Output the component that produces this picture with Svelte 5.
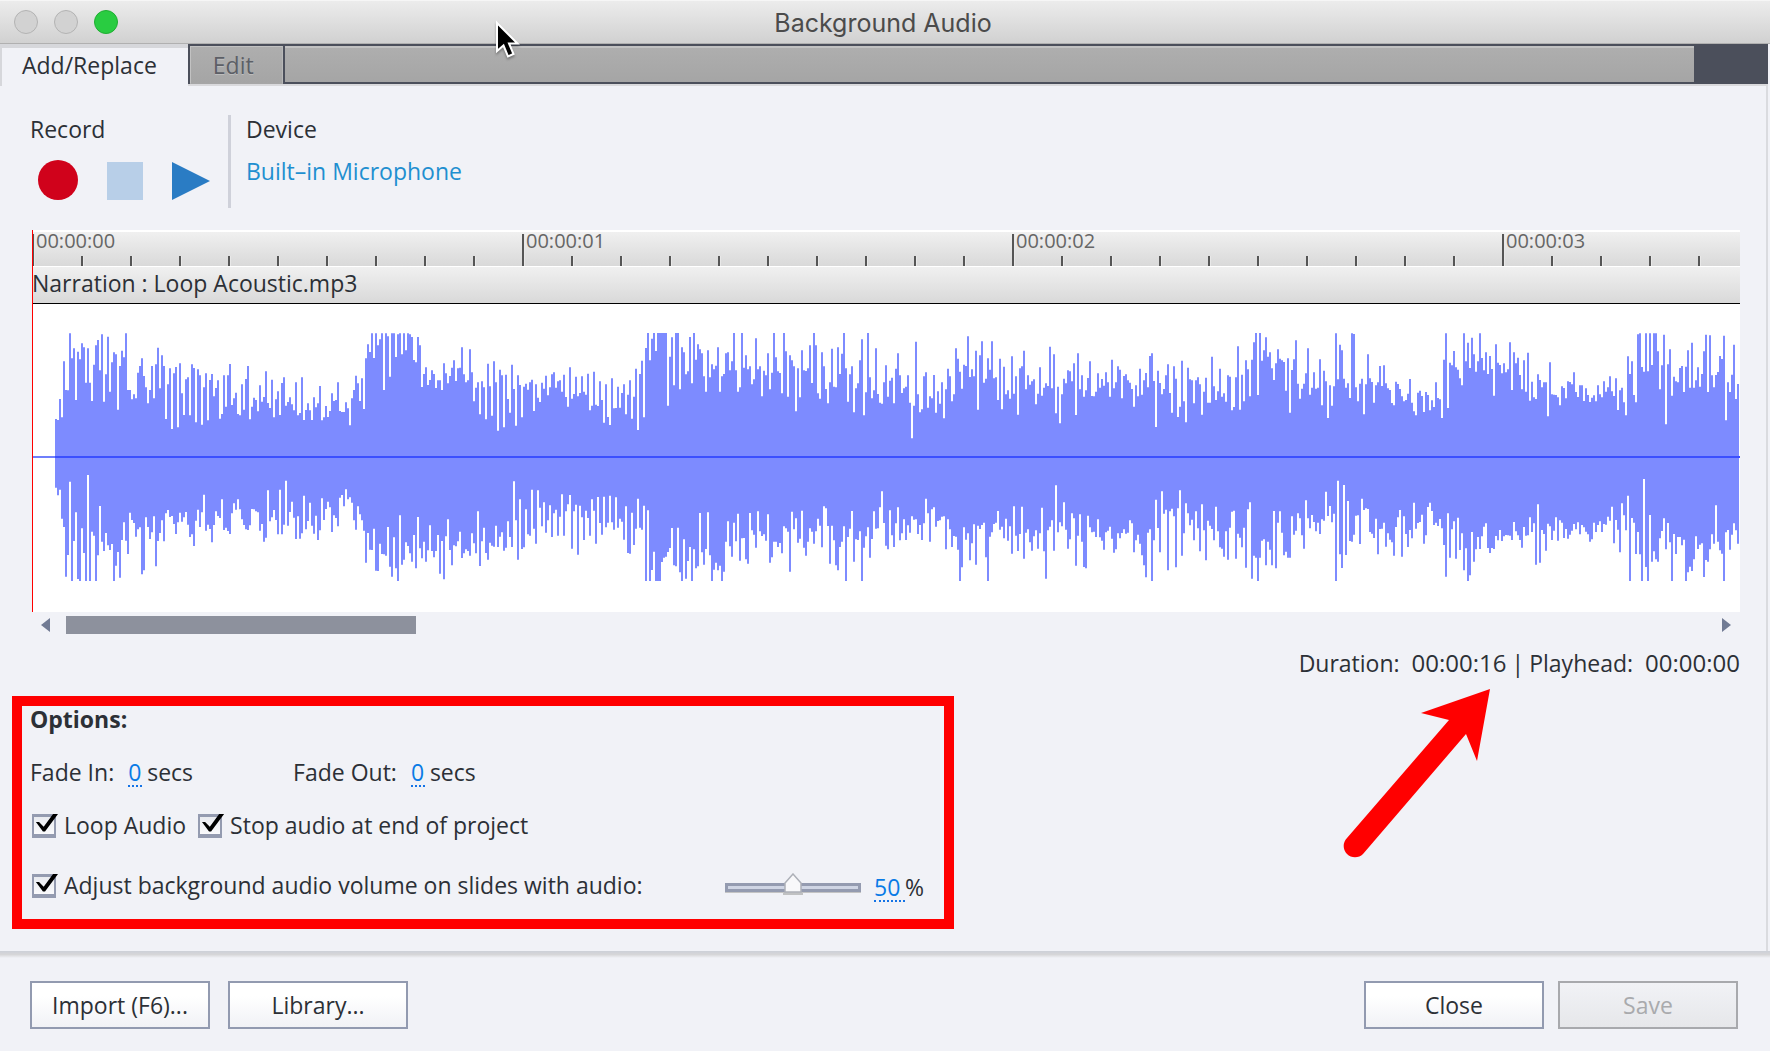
<script lang="ts">
	// Sample edges in thirds of a pixel; `mid` is where each block keeps its zero line.
	interface Block {
		mid: number;
		top: number[];
		bottom: number[];
	}

	const blocks: Block[] = [
		{
			mid: 711,
			top: [
				597, 600, 537, 592, 424, 510, 511, 340, 415, 385, 540, 395, 418, 370, 382, 488, 385, 488, 543, 434,
				376, 360, 451, 343, 545, 463, 350, 515, 427, 397, 403, 569, 438, 392, 412, 340, 510, 510, 538, 523,
				535, 458, 438, 415, 468, 502, 550, 510, 438, 535, 433, 383, 505, 406, 438, 597, 493, 445, 627, 460,
				441, 622, 430, 520, 585, 478, 472, 586, 433, 444, 607, 448, 466, 614, 502, 460, 601, 480, 462, 529,
				504, 481, 596, 582, 466, 560, 466, 432, 555, 535, 518, 582, 586, 493, 569, 477, 438, 598, 560, 533,
				540, 574, 496, 545, 531, 454, 549, 564, 479, 592, 538, 514, 585, 489, 472, 557, 546, 532, 553, 571,
				487, 586, 579, 472, 600, 570, 550, 571, 600, 532, 562, 550, 498, 601, 592, 558, 591, 573, 520, 543,
				540, 487, 573, 576, 576, 547, 565, 616, 535, 510, 467, 490, 543, 475, 567, 415, 373, 396, 340, 414,
				340, 376, 358, 340, 510, 340, 349, 470, 340, 340, 411, 343, 340, 403, 340, 391, 340, 343, 351, 420,
				427, 351, 376, 501, 462, 442, 495, 480, 451, 462, 504, 481, 481, 510, 430, 460, 490, 468
			],
			bottom: [
				803, 826, 809, 896, 921, 1070, 1005, 785, 1083, 963, 877, 1077, 1083, 925, 999, 1083, 765, 1083, 935, 947,
				1083, 1006, 858, 965, 993, 939, 976, 990, 972, 1083, 1037, 996, 1073, 960, 907, 962, 1002, 878, 900, 909,
				950, 928, 922, 1063, 1051, 892, 921, 957, 937, 889, 1039, 963, 939, 901, 964, 880, 870, 891, 888, 912,
				942, 907, 878, 905, 892, 876, 914, 951, 943, 978, 902, 869, 921, 877, 824, 932, 914, 927, 967, 915,
				874, 888, 894, 838, 930, 923, 933, 942, 880, 850, 869, 838, 868, 898, 915, 928, 930, 916, 867, 868,
				874, 877, 932, 912, 965, 953, 811, 904, 892, 870, 900, 943, 809, 943, 914, 782, 917, 876, 845, 893,
				957, 889, 956, 940, 827, 928, 903, 848, 917, 941, 887, 960, 931, 835, 900, 867, 845, 862, 936, 886,
				894, 919, 833, 825, 859, 808, 838, 832, 848, 901, 929, 859, 883, 901, 932, 1028, 939, 989, 990, 926,
				1052, 1053, 971, 1002, 1003, 1007, 921, 1040, 1070, 952, 1045, 1083, 886, 1034, 1019, 967, 978, 1000, 1025, 945,
				1045, 891, 985, 1015, 965, 1025, 991, 916, 993, 1012, 993, 945, 1061, 963, 1078, 949, 898, 990
			]
		},
		{
			mid: 471,
			top: [
				203, 181, 243, 205, 203, 142, 223, 247, 241, 148, 217, 304, 263, 247, 343, 244, 262, 358, 191, 259,
				347, 184, 247, 392, 209, 226, 382, 224, 297, 338, 194, 267, 377, 226, 255, 352, 260, 251, 269, 247,
				239, 333, 253, 293, 306, 248, 266, 227, 286, 262, 223, 217, 263, 244, 241, 275, 224, 291, 320, 202,
				296, 282, 230, 289, 279, 229, 275, 284, 221, 331, 317, 215, 314, 318, 244, 300, 368, 253, 351, 375,
				235, 325, 324, 260, 323, 279, 253, 343, 284, 241, 356, 290, 206, 390, 222, 182, 352, 144, 99, 181,
				116, 99, 153, 99, 99, 99, 99, 99, 317, 170, 112, 256, 99, 99, 268, 142, 157, 223, 214, 111,
				250, 99, 179, 133, 148, 160, 229, 275, 151, 232, 193, 208, 197, 142, 275, 229, 222, 160, 157, 211,
				184, 99, 211, 275, 262, 99, 203, 166, 208, 199, 253, 238, 115, 208, 199, 289, 212, 226, 160, 268,
				218, 99, 172, 214, 219, 280, 99, 154, 290, 166, 181, 199, 334, 205, 292, 151, 211, 213, 205, 136,
				249, 99, 136, 280, 296, 157, 199, 267, 310, 247, 146, 260, 262, 142, 222, 161, 99, 205, 305, 223,
				199, 337, 265, 250, 181, 118, 346, 277, 99, 232, 295, 271, 145, 282, 308
			],
			bottom: [
				796, 736, 739, 724, 695, 774, 760, 748, 753, 767, 700, 730, 760, 634, 798, 724, 683, 759, 779, 728,
				737, 740, 677, 741, 710, 697, 752, 743, 664, 711, 741, 544, 661, 779, 598, 747, 742, 628, 703, 707,
				569, 686, 731, 571, 623, 679, 607, 698, 661, 616, 711, 640, 629, 707, 650, 583, 707, 634, 613, 585,
				746, 634, 614, 764, 617, 652, 720, 632, 654, 707, 598, 632, 731, 591, 669, 704, 590, 682, 668, 587,
				667, 689, 592, 683, 656, 665, 719, 619, 759, 761, 638, 735, 686, 596, 683, 689, 617, 843, 631, 843,
				810, 755, 843, 843, 843, 786, 773, 770, 756, 744, 684, 796, 799, 683, 817, 843, 718, 836, 783, 741,
				843, 748, 805, 799, 639, 757, 794, 747, 637, 766, 843, 809, 788, 811, 797, 843, 815, 725, 664, 739,
				770, 668, 724, 641, 782, 715, 714, 778, 791, 639, 691, 704, 743, 634, 694, 708, 703, 722, 643, 788,
				772, 725, 725, 741, 729, 760, 679, 685, 695, 815, 635, 688, 655, 728, 716, 632, 743, 767, 725, 685,
				695, 731, 694, 656, 677, 742, 619, 625, 678, 791, 677, 721, 796, 811, 741, 725, 679, 843, 711, 686,
				633, 785, 718, 720, 694, 843, 743, 709, 682, 773, 717, 634, 686, 685, 622
			]
		},
		{
			mid: 471,
			top: [
				311, 247, 196, 290, 242, 233, 310, 206, 160, 226, 279, 265, 260, 226, 308, 415, 317, 125, 283, 337,
				328, 229, 217, 323, 289, 295, 225, 338, 274, 311, 247, 355, 268, 206, 229, 304, 283, 145, 176, 215,
				266, 194, 198, 109, 231, 208, 229, 152, 329, 166, 124, 248, 236, 175, 209, 124, 235, 232, 300, 176,
				328, 200, 283, 271, 296, 169, 281, 229, 344, 205, 199, 152, 268, 226, 254, 244, 238, 313, 281, 202,
				287, 263, 250, 258, 140, 265, 163, 340, 260, 370, 283, 236, 250, 211, 214, 244, 190, 345, 160, 268,
				226, 290, 271, 234, 184, 288, 289, 275, 220, 263, 237, 257, 217, 247, 290, 179, 265, 247, 199, 209,
				295, 228, 223, 241, 248, 267, 320, 256, 289, 206, 284, 241, 219, 262, 168, 160, 243, 381, 212, 249,
				283, 267, 226, 193, 279, 338, 199, 236, 351, 320, 182, 304, 367, 203, 238, 241, 310, 241, 232, 253,
				344, 275, 233, 308, 308, 170, 259, 300, 274, 206, 290, 280, 305, 226, 230, 331, 321, 232, 139, 329,
				224, 304, 181, 208, 289, 179, 127, 99, 285, 99, 182, 151, 112, 170, 157, 205, 240, 190, 148, 176,
				181, 186, 272, 175, 338, 210, 178, 121, 251, 296, 266, 251, 220, 145, 284
			],
			bottom: [
				574, 669, 737, 748, 631, 706, 741, 670, 622, 721, 700, 658, 720, 676, 698, 649, 659, 658, 702, 675,
				720, 670, 596, 640, 725, 628, 622, 680, 663, 661, 650, 649, 748, 658, 688, 741, 708, 710, 749, 843,
				802, 682, 719, 700, 781, 730, 673, 794, 677, 687, 675, 668, 772, 843, 710, 697, 672, 668, 633, 689,
				680, 715, 656, 722, 679, 761, 619, 707, 753, 702, 620, 776, 698, 688, 727, 752, 709, 691, 746, 700,
				623, 754, 836, 691, 680, 661, 752, 556, 697, 667, 679, 607, 689, 746, 718, 640, 655, 797, 707, 643,
				725, 801, 805, 647, 682, 697, 695, 711, 658, 712, 722, 749, 697, 692, 680, 716, 758, 748, 700, 715,
				699, 688, 701, 698, 661, 670, 757, 721, 704, 731, 766, 796, 832, 698, 688, 843, 721, 599, 684, 757,
				574, 641, 629, 811, 634, 626, 649, 802, 625, 571, 767, 700, 610, 640, 676, 659, 721, 634, 685, 754,
				613, 691, 781, 662, 677, 687, 721, 620, 694, 742, 746, 770, 694, 779, 683, 635, 632, 776, 701, 713,
				742, 683, 803, 628, 607, 836, 767, 773, 843, 773, 722, 718, 796, 725, 749, 796, 633, 805, 668, 634,
				698, 766, 755, 773, 773, 649, 704, 692, 640, 655, 706, 746, 601, 655, 685
			]
		},
		{
			mid: 711,
			top: [
				503, 457, 506, 503, 418, 556, 452, 484, 594, 496, 557, 499, 340, 478, 374, 391, 476, 503, 490, 534,
				340, 342, 502, 544, 491, 476, 583, 493, 403, 475, 486, 548, 496, 487, 438, 498, 436, 490, 505, 510,
				549, 556, 485, 492, 507, 529, 544, 540, 521, 477, 548, 574, 586, 518, 512, 528, 576, 516, 525, 571,
				541, 561, 487, 534, 538, 594, 419, 340, 564, 428, 436, 393, 442, 449, 475, 496, 340, 424, 368, 444,
				353, 403, 455, 424, 340, 414, 451, 397, 462, 408, 447, 527, 373, 428, 435, 460, 430, 457, 448, 367,
				510, 397, 430, 413, 465, 508, 421, 515, 398, 542, 485, 532, 537, 463, 480, 502, 487, 487, 589, 427,
				523, 524, 525, 532, 556, 499, 504, 535, 484, 486, 493, 457, 516, 531, 496, 496, 543, 505, 525, 546,
				533, 526, 544, 496, 523, 532, 484, 515, 502, 469, 514, 528, 475, 570, 511, 503, 547, 586, 409, 462,
				424, 525, 547, 343, 340, 441, 455, 340, 454, 340, 435, 340, 340, 394, 508, 436, 344, 613, 433, 388,
				527, 470, 484, 487, 444, 438, 516, 440, 391, 503, 368, 503, 481, 442, 500, 462, 394, 344, 516, 346,
				466, 502, 465, 456, 408, 417, 347, 601, 487, 516, 464, 374, 537, 492
			],
			bottom: [
				885, 906, 934, 908, 942, 898, 902, 815, 888, 858, 907, 881, 1083, 782, 1003, 1044, 795, 1005, 843, 963,
				965, 944, 887, 886, 972, 836, 870, 865, 867, 936, 941, 954, 896, 1003, 927, 926, 908, 980, 940, 959,
				967, 1007, 921, 892, 870, 1010, 889, 942, 981, 930, 955, 848, 926, 909, 906, 884, 971, 946, 861, 848,
				873, 915, 908, 918, 897, 925, 975, 1070, 880, 1013, 928, 904, 1016, 893, 990, 940, 1051, 985, 1083, 1066,
				936, 1025, 988, 951, 987, 949, 920, 910, 984, 999, 984, 987, 948, 961, 930, 963, 949, 945, 946, 947,
				960, 906, 934, 946, 960, 983, 921, 947, 946, 892, 936, 910, 1034, 853, 1028, 930, 942, 992, 911, 919,
				960, 932, 892, 962, 901, 908, 954, 927, 956, 944, 932, 912, 928, 907, 943, 915, 922, 935, 943, 965,
				958, 908, 936, 915, 904, 936, 912, 914, 890, 902, 860, 970, 900, 929, 997, 850, 886, 931, 827, 1083,
				894, 908, 1002, 936, 1003, 1083, 777, 1041, 1083, 885, 1025, 994, 1018, 1025, 955, 933, 895, 988, 909, 967,
				1083, 942, 1002, 951, 951, 976, 959, 1083, 1057, 1040, 1053, 1018, 949, 987, 974, 970, 1071, 1020, 1025, 988,
				943, 971, 856, 965, 991, 1001, 1083, 937, 930, 989, 944, 910, 931, 971
			]
		}
	];

	const LEAD_IN = 23;
	const BAR_W = 2;
	const ZERO = 153;
	const WAVE_H = 308;

	const samples = blocks.flatMap((b) =>
		b.top.map((t, i) => ({ up: (b.mid - t) / 3, down: (b.bottom[i] - b.mid) / 3 }))
	);
	const waveWidth = LEAD_IN + samples.length * BAR_W + 1;
	const wavePath = samples
		.map((s, i) => `M${LEAD_IN + i * BAR_W + 1} ${(ZERO - s.up).toFixed(1)}V${(ZERO + s.down).toFixed(1)}`)
		.join('');

	const seconds = ['00:00:00', '00:00:01', '00:00:02', '00:00:03'];

	let tab = $state('add');
	let fadeIn = $state('0');
	let fadeOut = $state('0');
	let loop = $state(true);
	let stopAtEnd = $state(true);
	let adjust = $state(true);
	let volume = $state(50);
</script>

<header class="titlebar">
	<div class="lights">
		<span class="light"></span>
		<span class="light"></span>
		<span class="light zoom"></span>
	</div>
	<h1>Background Audio</h1>
	<svg class="cursor" width="30" height="42" viewBox="0 0 30 42">
		<path
			d="M3 3V31L9.5 25.5L14 36.5L19.5 34L15 23.5H23.5Z"
			fill="#000"
			stroke="#fff"
			stroke-width="2"
		/>
	</svg>
</header>

<nav class="tabs" role="tablist">
	<button class="tab" class:active={tab === 'add'} role="tab" aria-selected={tab === 'add'} onclick={() => (tab = 'add')}>Add/Replace</button>
	<button class="tab" class:active={tab === 'edit'} role="tab" aria-selected={tab === 'edit'} onclick={() => (tab = 'edit')}>Edit</button>
	<div class="tab-fill"></div>
</nav>

<main class="panel">
	<section class="source">
		<div class="record">
			<h2>Record</h2>
			<div class="transport">
				<button aria-label="Record">
					<svg width="40" height="40"><circle cx="20" cy="20" r="20" fill="#d0021b" /></svg>
				</button>
				<button aria-label="Stop">
					<svg width="36" height="40"><rect y="2" width="36" height="38" fill="#b8cfe8" /></svg>
				</button>
				<button aria-label="Play">
					<svg width="38" height="40"><path d="M0 2V40L38 21Z" fill="#2a7cc4" /></svg>
				</button>
			</div>
		</div>
		<div class="device">
			<h2>Device</h2>
			<a href="#device">Built–in Microphone</a>
		</div>
	</section>

	<section class="timeline">
		<div class="ruler">
			{#each seconds as second (second)}
				<div class="second">
					<span>{second}</span>
					{#each { length: 10 } as _, i (i)}
						<i class="tick"></i>
					{/each}
				</div>
			{/each}
		</div>
		<div class="clip-name">Narration : Loop Acoustic.mp3</div>
		<div class="wave">
			<svg width={waveWidth} height={WAVE_H}>
				<path d={wavePath} stroke="#7d8bff" stroke-width={BAR_W} />
				<rect x="0" y={ZERO - 1} width={LEAD_IN} height="2" fill="#6f7ffb" />
				<rect x={LEAD_IN} y={ZERO - 1} width={waveWidth} height="2" fill="#3b4fff" />
			</svg>
		</div>
		<div class="playhead"></div>
	</section>

	<div class="scroller">
		<button aria-label="Scroll left"><svg width="9" height="14"><path d="M9 0V14L0 7Z" fill="#717b94" /></svg></button>
		<div class="track"><div class="thumb"></div></div>
		<button aria-label="Scroll right"><svg width="9" height="14"><path d="M0 0V14L9 7Z" fill="#717b94" /></svg></button>
	</div>

	<div class="timing">
		<span>Duration:</span>
		<span class="time">00:00:16</span>
		<span class="bar">|</span>
		<span>Playhead:</span>
		<span class="time">00:00:00</span>
		<svg class="pointer" width="150" height="172" viewBox="0 0 150 172">
			<path d="M147 0L78 24L106 31L4 149A11 11 0 0 0 20 165L123 45L134 72Z" fill="#f00" />
		</svg>
	</div>

	<section class="options">
		<h3>Options:</h3>
		<div class="fades">
			<div class="fade">
				<label for="fade-in">Fade In:</label>
				<input id="fade-in" class="value" type="text" bind:value={fadeIn} />
				<span>secs</span>
			</div>
			<div class="fade">
				<label for="fade-out">Fade Out:</label>
				<input id="fade-out" class="value" type="text" bind:value={fadeOut} />
				<span>secs</span>
			</div>
		</div>
		<div class="checks">
			<label><input type="checkbox" bind:checked={loop} />Loop Audio</label>
			<label><input type="checkbox" bind:checked={stopAtEnd} />Stop audio at end of project</label>
		</div>
		<div class="volume">
			<label><input type="checkbox" bind:checked={adjust} />Adjust background audio volume on slides with audio:</label>
			<div class="level">
				<input type="range" min="0" max="100" bind:value={volume} aria-label="Background volume" />
				<input class="value wide" type="text" bind:value={volume} aria-label="Background volume percent" />
				<span>%</span>
			</div>
		</div>
	</section>
</main>

<footer>
	<button>Import (F6)...</button>
	<button>Library...</button>
	<button class="push">Close</button>
	<button disabled>Save</button>
</footer>

<style>
	:global(body) {
		background: #f1f2f7;
		color: #2c3036;
		font: 23px/28px 'Open Sans', 'Noto Sans', sans-serif;
	}
	h1,
	h2,
	h3 {
		margin: 0;
		font-size: 23px;
		font-weight: 400;
	}
	button {
		padding: 0;
		border: 0;
		background: none;
		font: inherit;
		color: inherit;
	}
	svg {
		display: block;
	}

	.titlebar {
		position: relative;
		display: grid;
		grid-template-columns: 1fr auto 1fr;
		align-items: center;
		box-sizing: border-box;
		height: 44px;
		padding: 0 18px 0 14px;
		border-top: 1px solid #f6f6f6;
		border-bottom: 1px solid #b0b0b0;
		background: linear-gradient(#ececec, #d1d1d1);
	}
	.titlebar h1 {
		padding-top: 2px;
		font: 25px/40px Inter, sans-serif;
		color: #4b4b4b;
	}
	.lights {
		display: flex;
		gap: 16px;
	}
	.light {
		box-sizing: border-box;
		width: 24px;
		height: 24px;
		border: 1px solid #b3b3b3;
		border-radius: 50%;
		background: #d2d2d2;
	}
	.light.zoom {
		border-color: #1fae32;
		background: #29cc41;
	}
	.cursor {
		position: absolute;
		left: 494px;
		top: 19px;
		z-index: 2;
		filter: drop-shadow(0 2px 1px rgb(0 0 0 / 0.3));
	}

	.tabs {
		display: flex;
		height: 42px;
		margin-right: 2px;
		padding-right: 74px;
		background: linear-gradient(#4b4f5b 40px, #d9d9dc 40px);
	}
	.tab {
		box-sizing: border-box;
		height: 38px;
		margin: 2px 0 2px 2px;
		padding: 0 28px 0 22px;
		border: 1px solid;
		border-color: #c2c2c2 #b8b8b8 #a6a6a6 #c2c2c2;
		background: linear-gradient(#aeaeae, #a5a5a5);
		color: #5c5f66;
		text-shadow: 0 1px 0 #bdbdbd;
	}
	.tab.active {
		height: 42px;
		margin: 0;
		padding: 0 31px 4px 20px;
		border: solid #d6d7db;
		border-width: 4px 0 0 2px;
		background: #f1f2f7;
		color: #2c3036;
		text-shadow: none;
	}
	.tab-fill {
		flex: 1;
		box-sizing: border-box;
		height: 36px;
		margin: 2px 0 0 2px;
		border-top: 2px solid #c2c2c2;
		background: linear-gradient(#aeaeae, #a5a5a5);
	}

	.panel {
		margin-right: 2px;
		padding: 29px 26px 22px 12px;
		border-right: 2px solid #dadbdf;
	}
	.source {
		display: flex;
		gap: 15px;
		padding-left: 18px;
	}
	.record {
		display: flex;
		flex-direction: column;
		gap: 17px;
		padding-right: 18px;
		padding-bottom: 8px;
		border-right: 3px solid #cfd1da;
	}
	.transport {
		display: flex;
		gap: 29px;
		padding-left: 8px;
	}
	.device {
		display: flex;
		flex-direction: column;
		gap: 14px;
	}
	.device a {
		color: #1f8fd0;
		text-decoration: none;
	}

	.timeline {
		position: relative;
		margin: 22px 0 0 20px;
	}
	.ruler {
		display: flex;
		overflow: hidden;
		box-sizing: border-box;
		height: 36px;
		border-top: 2px solid #fff;
		background: linear-gradient(#f0f0f0, #d9d9d9);
	}
	.second {
		position: relative;
		flex: none;
		display: flex;
		align-items: flex-end;
		width: 490px;
		height: 34px;
	}
	.second span {
		position: absolute;
		left: 4px;
		top: 0;
		font-size: 20px;
		line-height: 18px;
		color: #666;
	}
	.tick {
		box-sizing: border-box;
		width: 49px;
		height: 10px;
		border-left: 2px solid #555;
		box-shadow: inset 1px 0 0 #e8e8e8;
	}
	.second span + .tick {
		height: 32px;
	}
	.clip-name {
		padding: 1px 0 5px;
		border-top: 1px solid #fff;
		border-bottom: 1px solid #000;
		height: 30px;
		background: linear-gradient(#f0f0f0, #d9d9d9);
		line-height: 30px;
	}
	.wave {
		overflow: hidden;
		background: #fff;
	}
	.playhead {
		position: absolute;
		top: 0;
		bottom: 0;
		left: 0;
		width: 1px;
		background: #f00;
	}

	.scroller {
		display: flex;
		align-items: center;
		gap: 16px;
		margin: 4px 9px 0 29px;
	}
	.track {
		flex: 1;
	}
	.thumb {
		width: 350px;
		height: 18px;
		background: #8d919d;
	}

	.timing {
		position: relative;
		display: flex;
		justify-content: flex-end;
		margin-top: 15px;
	}
	.time {
		margin-left: 12px;
		font-size: 24px;
	}
	.bar {
		margin: 0 5px;
	}
	.pointer {
		position: absolute;
		right: 247px;
		top: 40px;
	}

	.options {
		box-sizing: border-box;
		width: 942px;
		margin-top: 19px;
		padding: 0 20px 17px 8px;
		border: 10px solid #f00;
	}
	.options h3 {
		font-weight: 700;
		line-height: 26px;
	}
	.fades {
		display: flex;
		gap: 100px;
		margin-top: 26px;
	}
	.fade {
		display: flex;
		align-items: baseline;
	}
	.value {
		box-sizing: border-box;
		width: 14px;
		height: 28px;
		margin: 0 5px 0 14px;
		padding: 0;
		border: 0;
		border-bottom: 2px dotted #1473e6;
		background: none;
		color: #0a7be6;
		font: inherit;
	}
	.value.wide {
		width: 31px;
		margin: 0 0 0 13px;
	}
	.checks {
		display: flex;
		gap: 10px;
		margin-top: 24px;
	}
	.checks label,
	.volume label {
		display: flex;
		align-items: center;
		gap: 8px;
		padding-left: 2px;
	}
	input[type='checkbox'] {
		appearance: none;
		box-sizing: border-box;
		width: 24px;
		height: 24px;
		margin: 2px 0 0;
		border: solid #949bb0;
		border-width: 3px 2px 4px;
		background: linear-gradient(#e9ebf0, #fafafc);
	}
	input[type='checkbox']:checked::after {
		content: '';
		display: block;
		width: 26px;
		height: 20px;
		margin: -3px 0 0 -2px;
		background: #000;
		clip-path: polygon(15% 40%, 27% 40%, 45% 64%, 81% 0, 100% 0, 50% 88%, 42% 88%);
	}
	.volume {
		display: flex;
		justify-content: space-between;
		align-items: flex-start;
		margin-top: 32px;
	}
	.level {
		display: flex;
		align-items: baseline;
		padding-top: 2px;
	}
	input[type='range'] {
		appearance: none;
		align-self: center;
		width: 136px;
		height: 20px;
		margin: 0;
		background: none;
	}
	input[type='range']::-webkit-slider-runnable-track {
		box-sizing: border-box;
		height: 9px;
		border: 3px solid #949bb0;
		background: #cfd5e4;
		box-shadow: 0 1px 0 #c4c4c4;
	}
	input[type='range']::-webkit-slider-thumb {
		appearance: none;
		width: 20px;
		height: 23px;
		margin-top: -13px;
		background: url("data:image/svg+xml,%3Csvg xmlns='http://www.w3.org/2000/svg' width='20' height='23'%3E%3Cpath d='M2 19V10L10 1L18 10V19Z' fill='%23f8f8fa' stroke='%23adb0b8' stroke-width='1.5'/%3E%3Cpath d='M0 20H20V22H0Z' fill='%23b4b4b4' opacity='.8'/%3E%3C/svg%3E");
	}

	footer {
		position: relative;
		display: flex;
		gap: 18px;
		padding: 30px 32px 23px 30px;
	}
	footer::before {
		content: '';
		position: absolute;
		top: 0;
		left: 0;
		right: 0;
		height: 7px;
		background: linear-gradient(#cdd0d8, #d6d6d8 50%, #f1f2f7);
	}
	footer button {
		width: 180px;
		height: 48px;
		border: 2px solid #929ab0;
		background: linear-gradient(#fff 30%, #f1f2f6);
	}
	footer .push {
		margin-left: auto;
	}
	footer .push + button {
		margin-left: -4px;
	}
	footer button:disabled {
		border-color: #a8a9ad;
		background: linear-gradient(#f1f2f6, #e6e7ea);
		color: #a9aaad;
	}
</style>
